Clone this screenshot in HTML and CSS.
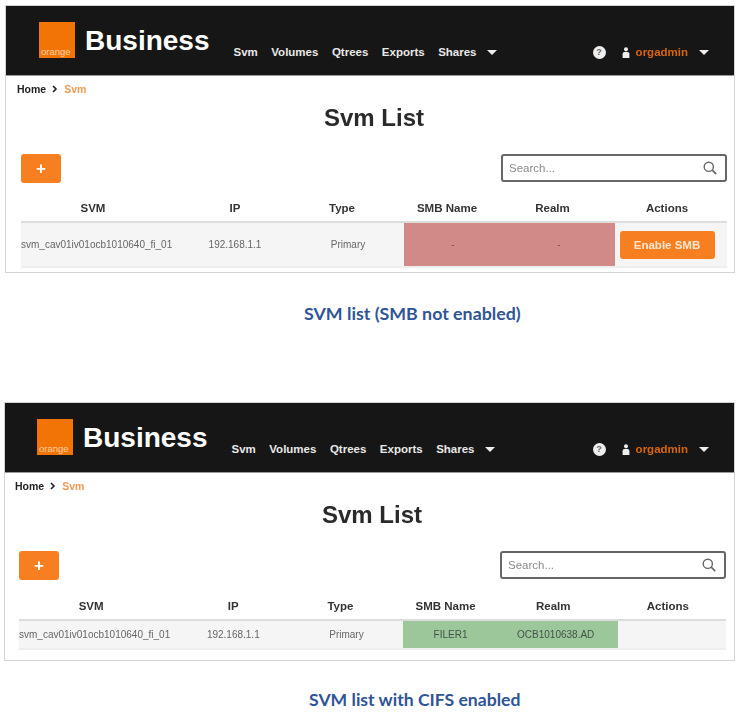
FILE: index.html
```html
<!DOCTYPE html>
<html lang="en">
<head>
    <meta charset="UTF-8">
    <meta name="viewport" content="width=device-width, initial-scale=1.0">
    <title>Svm List</title>
    <link rel="stylesheet" href="styles.css">
</head>
<body>
    <div class="window window-first">
        <div class="topbar">
            <div class="logo"><span>orange</span></div>
            <div class="brand">Business</div>
            <nav class="nav">
                <a>Svm</a>
                <a>Volumes</a>
                <a>Qtrees</a>
                <a>Exports</a>
                <a>Shares</a>
                <i class="caret"></i>
            </nav>
            <div class="account">
                <span class="help">?</span>
                <svg class="user" width="8" height="11" viewBox="0 0 8 11"><circle cx="4" cy="2.2" r="2"/><path d="M0.6 11V7.2C0.6 5.6 1.8 4.8 4 4.8s3.4 0.8 3.4 2.4V11z"/></svg>
                <span class="username">orgadmin</span>
                <i class="caret"></i>
            </div>
        </div>
        <div class="breadcrumb">
            <span>Home</span>
            <svg width="6" height="8" viewBox="0 0 6 8"><path d="M1 1l3 3-3 3" fill="none" stroke="#222" stroke-width="1.6"/></svg>
            <span class="current">Svm</span>
        </div>
        <h1>Svm List</h1>
        <div class="toolbar">
            <button class="add">+</button>
            <div class="search">
                <span>Search...</span>
                <svg width="14" height="14" viewBox="0 0 14 14"><circle cx="5.8" cy="5.8" r="4.6" fill="none" stroke="#666" stroke-width="1.4"/><path d="M9.2 9.2l4 4" stroke="#666" stroke-width="1.7"/></svg>
            </div>
        </div>
        <table>
            <thead>
                <tr>
                    <th class="c-svm">SVM</th>
                    <th class="c-ip">IP</th>
                    <th class="c-type">Type</th>
                    <th class="c-smb">SMB Name</th>
                    <th class="c-realm">Realm</th>
                    <th class="c-actions">Actions</th>
                </tr>
            </thead>
            <tbody>
                <tr>
                    <td class="c-svm">svm_cav01iv01ocb1010640_fi_01</td>
                    <td class="c-ip">192.168.1.1</td>
                    <td class="c-type">Primary</td>
                    <td class="c-smb off">-</td>
                    <td class="c-realm off off-end">-</td>
                    <td class="c-actions"><button class="enable">Enable SMB</button></td>
                </tr>
            </tbody>
        </table>
    </div>
    <p class="caption caption-first">SVM list (SMB not enabled)</p>

    <div class="window window-second">
        <div class="topbar">
            <div class="logo"><span>orange</span></div>
            <div class="brand">Business</div>
            <nav class="nav">
                <a>Svm</a>
                <a>Volumes</a>
                <a>Qtrees</a>
                <a>Exports</a>
                <a>Shares</a>
                <i class="caret"></i>
            </nav>
            <div class="account">
                <span class="help">?</span>
                <svg class="user" width="8" height="11" viewBox="0 0 8 11"><circle cx="4" cy="2.2" r="2"/><path d="M0.6 11V7.2C0.6 5.6 1.8 4.8 4 4.8s3.4 0.8 3.4 2.4V11z"/></svg>
                <span class="username">orgadmin</span>
                <i class="caret"></i>
            </div>
        </div>
        <div class="breadcrumb">
            <span>Home</span>
            <svg width="6" height="8" viewBox="0 0 6 8"><path d="M1 1l3 3-3 3" fill="none" stroke="#222" stroke-width="1.6"/></svg>
            <span class="current">Svm</span>
        </div>
        <h1>Svm List</h1>
        <div class="toolbar">
            <button class="add">+</button>
            <div class="search">
                <span>Search...</span>
                <svg width="14" height="14" viewBox="0 0 14 14"><circle cx="5.8" cy="5.8" r="4.6" fill="none" stroke="#666" stroke-width="1.4"/><path d="M9.2 9.2l4 4" stroke="#666" stroke-width="1.7"/></svg>
            </div>
        </div>
        <table>
            <thead>
                <tr>
                    <th class="c-svm">SVM</th>
                    <th class="c-ip">IP</th>
                    <th class="c-type">Type</th>
                    <th class="c-smb">SMB Name</th>
                    <th class="c-realm">Realm</th>
                    <th class="c-actions">Actions</th>
                </tr>
            </thead>
            <tbody>
                <tr>
                    <td class="c-svm">svm_cav01iv01ocb1010640_fi_01</td>
                    <td class="c-ip">192.168.1.1</td>
                    <td class="c-type">Primary</td>
                    <td class="c-smb on">FILER1</td>
                    <td class="c-realm on">OCB1010638.AD</td>
                    <td class="c-actions"></td>
                </tr>
            </tbody>
        </table>
    </div>
    <p class="caption caption-second">SVM list with CIFS enabled</p>
</body>
</html>
```

FILE: styles.css
```css
body {
    margin: 0;
    background-color: #fff;
    font-family: "Liberation Sans", Arial, sans-serif;
    overflow: hidden;
}
.window {
    box-sizing: border-box;
    border: 1px solid #d4d4d4;
    filter: blur(0.4px);
}
.window-first {
    width: 730px;
    height: 268px;
    margin: 5px 0 0 5px;
}
.window-second {
    width: 731px;
    height: 259px;
    margin: 0 0 0 4px;
}
.topbar {
    display: flex;
    align-items: flex-start;
    height: 69px;
    padding-left: 33px;
    background-color: #161616;
    border-bottom: 1px solid #999;
}
.window-second .topbar {
    padding-left: 32px;
}
.logo {
    display: flex;
    align-items: flex-end;
    flex: none;
    width: 36px;
    height: 36px;
    margin-top: 16px;
    padding: 0 0 1px 2px;
    box-sizing: border-box;
    background-color: #f27405;
}
.logo span {
    color: #f9cfa6;
    font-size: 9.5px;
}
.brand {
    margin: 18px 0 0 10px;
    color: #fff;
    font-size: 28px;
    line-height: 34px;
    font-weight: bold;
}
.nav {
    display: flex;
    align-items: center;
    height: 14px;
    margin: 39px 0 0 24px;
    gap: 13.5px;
}
.nav a {
    color: #e8e8e8;
    font-size: 11.5px;
    font-weight: bold;
}
.nav .caret {
    margin-left: -3px;
}
.caret {
    width: 0;
    height: 0;
    border-left: 5px solid transparent;
    border-right: 5px solid transparent;
    border-top: 5px solid #eee;
}
.account {
    display: flex;
    align-items: center;
    height: 14px;
    margin: 39px 0 0 auto;
    padding-right: 25px;
}
.help {
    width: 13px;
    height: 13px;
    border-radius: 50%;
    background-color: #eee;
    color: #666;
    font-size: 9px;
    font-weight: bold;
    line-height: 13px;
    text-align: center;
}
.user {
    margin-left: 16px;
    fill: #eee;
}
.username {
    margin: 0 11px 0 6px;
    color: #d8660a;
    font-size: 11.5px;
    font-weight: bold;
}
.breadcrumb {
    display: flex;
    align-items: center;
    gap: 6px;
    height: 14px;
    padding: 6px 0 0 11px;
    color: #222;
    font-size: 10.5px;
    font-weight: bold;
}
.window-second .breadcrumb {
    padding-left: 10px;
}
.breadcrumb .current {
    color: #ef9a55;
}
h1 {
    margin: 7px 0 0;
    padding-left: 8px;
    color: #2a2a2a;
    font-size: 24px;
    line-height: 30px;
    font-weight: bold;
    text-align: center;
}
.window-second h1 {
    padding-left: 5px;
}
.toolbar {
    display: flex;
    justify-content: space-between;
    align-items: flex-start;
    margin: 21px 7px 0 15px;
}
.window-second .toolbar {
    margin: 21px 8px 0 14px;
}
.add {
    width: 40px;
    height: 29px;
    padding: 0;
    border: none;
    border-radius: 3px;
    background-color: #f77f1f;
    color: #fff;
    font-family: inherit;
    font-size: 17px;
    font-weight: bold;
}
.search {
    box-sizing: border-box;
    display: flex;
    justify-content: space-between;
    align-items: center;
    width: 226px;
    height: 28px;
    padding: 0 8px 0 6px;
    border: 2px solid #666;
    border-radius: 3px;
    color: #8a8a8a;
    font-size: 11.5px;
}
table {
    width: 706px;
    margin: 11px 0 0 15px;
    border-collapse: collapse;
    table-layout: fixed;
}
th, td {
    box-sizing: border-box;
    padding: 0;
    text-align: center;
}
th {
    height: 28px;
    border-bottom: 2px solid #ddd;
    color: #333;
    font-size: 11.5px;
    font-weight: bold;
    vertical-align: middle;
}
td {
    height: 45px;
    background-color: #f5f5f5;
    border-bottom: 2px solid #eee;
    color: #666;
    font-size: 10px;
}
.c-svm { width: 144px; }
.c-ip { width: 140px; }
.c-type { width: 99px; }
.c-smb { width: 86px; }
.c-realm { width: 125px; }
.c-actions { width: 112px; }
td.c-svm { text-align: left; white-space: nowrap; }
th.c-type { padding-right: 25px; }
td.c-type { padding-right: 13px; }
td.c-smb { padding-left: 12px; }
td.c-realm { padding-left: 13px; }
th.c-actions, td.c-actions { padding-right: 8px; }
.off {
    background-color: #d18a88;
    color: #8a4a4a;
}
.off-end {
    border-radius: 0 0 2px 0;
}
.enable {
    width: 95px;
    height: 28px;
    padding: 0;
    border: none;
    border-radius: 3px;
    background-color: #f77f1f;
    color: #fde6d2;
    font-family: inherit;
    font-size: 11.5px;
    font-weight: bold;
}
.window-second table {
    width: 707px;
    margin: 12px 0 0 14px;
}
.window-second td {
    height: 29px;
}
.window-second .c-realm { width: 129px; }
.window-second .c-actions { width: 108px; }
.window-second td.c-smb { padding-left: 10px; }
.window-second td.c-realm { padding-left: 5px; }
.on {
    background-color: #9cc79b;
    color: #44524a;
}
.window-second td.on {
    color: #44524a;
}
.caption {
    margin: 0;
    color: #2f5597;
    font-family: Lato, sans-serif;
    font-size: 17.8px;
    line-height: 20px;
    font-weight: bold;
}
.caption-first {
    padding: 30px 0 79px 304px;
}
.caption-second {
    padding: 29px 0 0 309px;
    font-size: 17.6px;
}
```
